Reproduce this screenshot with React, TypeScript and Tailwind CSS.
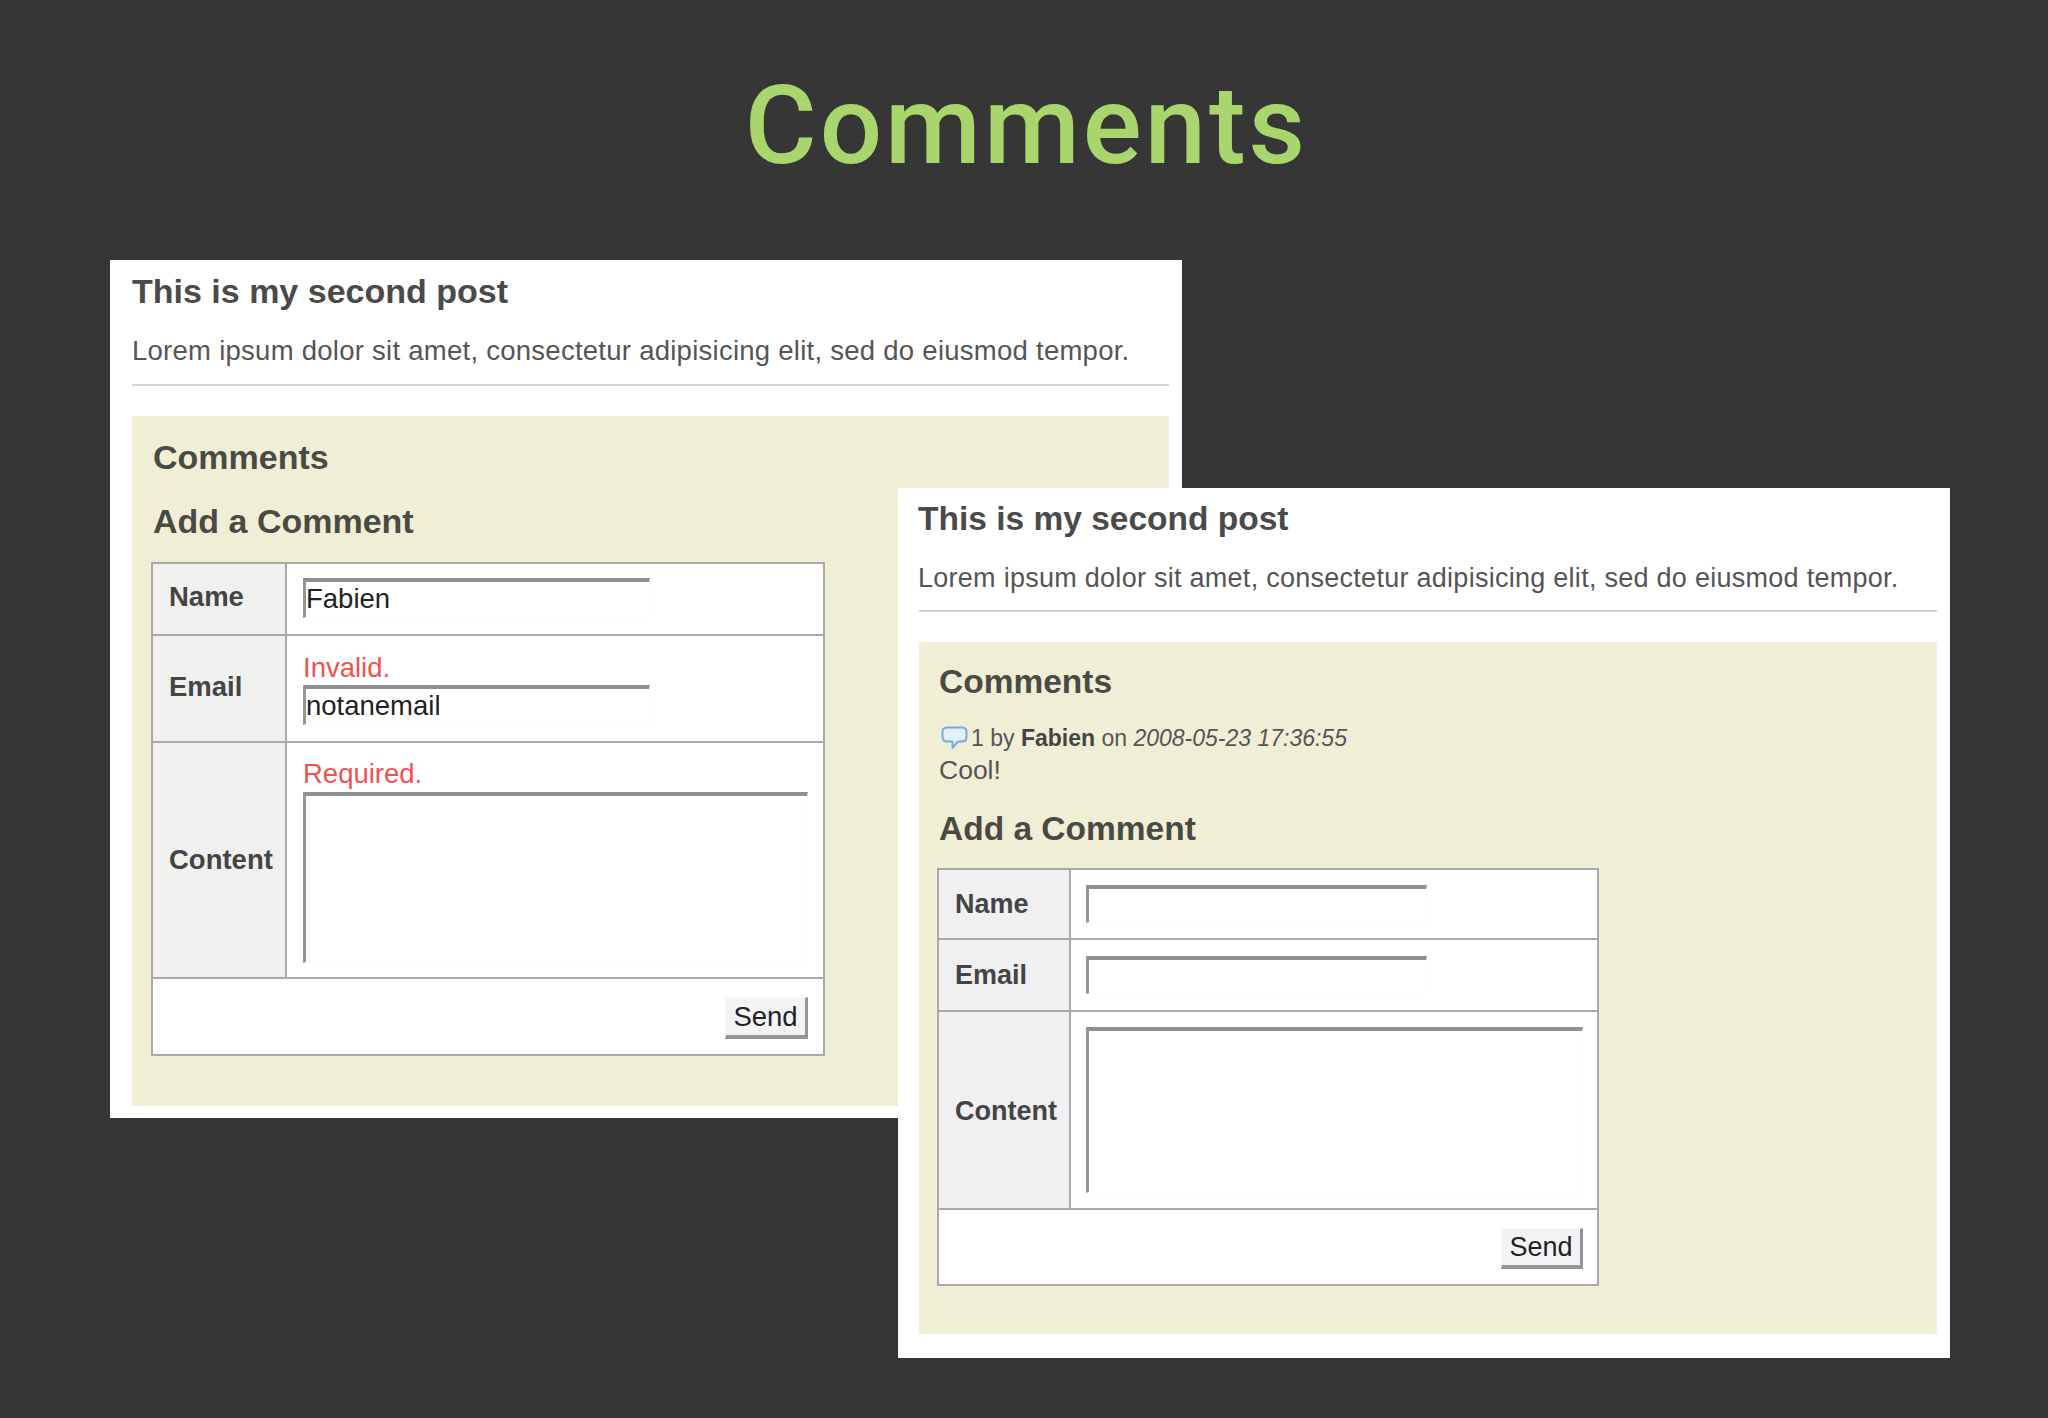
const Field = ({ value = "", box }: { value?: string; box: string }) => (
  <div className={`box-border border-t-[4px] border-l-[3px] border-r border-b border-t-[#909090] border-l-[#959595] border-r-[#fcfcfc] border-b-[#fcfcfc] bg-white pt-px text-[#222] leading-[32px] whitespace-nowrap ${box}`}>
    {value}
  </div>
);

const Send = ({ box }: { box: string }) => (
  <button className={`box-border flex items-center justify-center border-t border-l border-r-[3px] border-b-[4px] border-t-[#fafafa] border-l-[#fafafa] border-r-[#959595] border-b-[#959595] bg-[#f3f3f5] text-[#222] ${box}`}>
    Send
  </button>
);

const Bubble = () => (
  <svg width="27" height="24" viewBox="0 0 27 24" className="shrink-0">
    <path
      d="M6 1.5H21C24 1.5 25.5 3.2 25.5 6V11C25.5 14 24 15.5 21 15.5H17L11.5 22L11.5 15.5H6C3 15.5 1.5 14 1.5 11V6C1.5 3.2 3 1.5 6 1.5Z"
      fill="#e3f0fb"
      stroke="#78abdc"
      strokeWidth="2"
      strokeLinejoin="round"
    />
  </svg>
);

export default function App() {
  return (
    <div className="relative box-border h-[1418px] w-[2048px] overflow-hidden bg-[#363636] pt-[61px] font-['Liberation_Sans',Arial,sans-serif]">
      <h1 className="pl-[5px] text-center font-['Roboto',sans-serif] text-[110px] leading-[130px] font-medium tracking-[3px] text-[#a9d56d]">
        Comments
      </h1>

      {/* Screenshot 1: validation errors */}
      <section className="mt-[69px] ml-[110px] box-border h-[858px] w-[1072px] bg-white pt-[11px] pr-[13px] pl-[22px]">
        <h2 className="text-[34px] leading-[40px] font-bold text-[#4a4a4a]">This is my second post</h2>
        <p className="mt-[24px] text-[27.5px] leading-[32px] tracking-[0.26px] whitespace-nowrap text-[#555]">
          Lorem ipsum dolor sit amet, consectetur adipisicing elit, sed do eiusmod tempor.
        </p>
        <div className="mt-[17px] h-[2px] bg-[#d2d2d2]" />
        <div className="mt-[30px] box-border h-[690px] bg-[#f0efd6] pt-[21px] pl-[20px]">
          <h3 className="pl-px text-[34px] leading-[40px] font-bold text-[#4a4a45]">Comments</h3>
          <h3 className="mt-[24px] pl-px text-[34px] leading-[40px] font-bold text-[#4a4a45]">Add a Comment</h3>
          <div className="mt-[21px] -ml-px box-border w-[674px] border-2 border-[#a9a9a9] bg-white text-[27.5px] text-[#444]">
            <div className="flex h-[72px] border-b-2 border-[#a9a9a9]">
              <div className="flex w-[134px] items-center border-r-2 border-[#a9a9a9] bg-[#f0f1ef] pb-[4px] pl-[16px] font-bold">Name</div>
              <div className="pt-[14px] pl-[16px]">
                <Field value="Fabien" box="h-[40px] w-[347px]" />
              </div>
            </div>
            <div className="flex h-[107px] border-b-2 border-[#a9a9a9]">
              <div className="flex w-[134px] items-center border-r-2 border-[#a9a9a9] bg-[#f0f1ef] pb-[4px] pl-[16px] font-bold">Email</div>
              <div className="pt-[16px] pl-[16px]">
                <div className="leading-[32px] text-[#ee5252]">Invalid.</div>
                <Field value="notanemail" box="mt-px h-[40px] w-[347px]" />
              </div>
            </div>
            <div className="flex h-[236px] border-b-2 border-[#a9a9a9]">
              <div className="flex w-[134px] items-center border-r-2 border-[#a9a9a9] bg-[#f0f1ef] pl-[16px] font-bold">Content</div>
              <div className="pt-[15px] pl-[16px]">
                <div className="leading-[32px] text-[#ee5252]">Required.</div>
                <Field box="mt-[2px] h-[171px] w-[505px]" />
              </div>
            </div>
            <div className="flex h-[75px] justify-end pt-[18px] pr-[15px]">
              <Send box="h-[42px] w-[83px]" />
            </div>
          </div>
        </div>
      </section>

      {/* Screenshot 2: comment posted, overlaps the first one */}
      <section className="absolute top-[488px] left-[898px] box-border h-[870px] w-[1052px] bg-white pt-[11px] pr-[13px] pl-[21px]">
        <h2 className="-ml-px text-[33.5px] leading-[40px] font-bold text-[#4a4a4a]">This is my second post</h2>
        <p className="mt-[23px] -ml-px text-[27px] leading-[32px] tracking-[0.27px] whitespace-nowrap text-[#555]">
          Lorem ipsum dolor sit amet, consectetur adipisicing elit, sed do eiusmod tempor.
        </p>
        <div className="mt-[16px] h-[2px] bg-[#d2d2d2]" />
        <div className="mt-[30px] box-border h-[692px] bg-[#f0efd6] pt-[20px] pl-[19px]">
          <h3 className="pl-px text-[33.5px] leading-[40px] font-bold text-[#4a4a45]">Comments</h3>
          <div className="mt-[23px] flex h-[26px] items-center pl-[3px] text-[23px] leading-[26px] whitespace-nowrap text-[#555]">
            <Bubble />
            <span className="ml-[3px]">
              1 by <b className="text-[#444]">Fabien</b> on <i>2008-05-23 17:36:55</i>
            </span>
          </div>
          <p className="mt-[3px] pl-px text-[26.5px] leading-[32px] text-[#555]">Cool!</p>
          <h3 className="mt-[23px] pl-px text-[33.5px] leading-[40px] font-bold text-[#4a4a45]">Add a Comment</h3>
          <div className="mt-[19px] -ml-px box-border w-[662px] border-2 border-[#a9a9a9] bg-white text-[27px] text-[#444]">
            <div className="flex h-[70px] border-b-2 border-[#a9a9a9]">
              <div className="flex w-[132px] items-center border-r-2 border-[#a9a9a9] bg-[#f0f0f2] pl-[16px] font-bold">Name</div>
              <div className="pt-[15px] pl-[15px]">
                <Field box="h-[38px] w-[341px]" />
              </div>
            </div>
            <div className="flex h-[72px] border-b-2 border-[#a9a9a9]">
              <div className="flex w-[132px] items-center border-r-2 border-[#a9a9a9] bg-[#f0f0f2] pl-[16px] font-bold">Email</div>
              <div className="pt-[16px] pl-[15px]">
                <Field box="h-[38px] w-[341px]" />
              </div>
            </div>
            <div className="flex h-[198px] border-b-2 border-[#a9a9a9]">
              <div className="flex w-[132px] items-center border-r-2 border-[#a9a9a9] bg-[#f0f0f2] pt-[3px] pl-[16px] font-bold">Content</div>
              <div className="pt-[15px] pl-[15px]">
                <Field box="h-[166px] w-[497px]" />
              </div>
            </div>
            <div className="flex h-[74px] justify-end pt-[18px] pr-[14px]">
              <Send box="h-[41px] w-[82px]" />
            </div>
          </div>
        </div>
      </section>
    </div>
  );
}
